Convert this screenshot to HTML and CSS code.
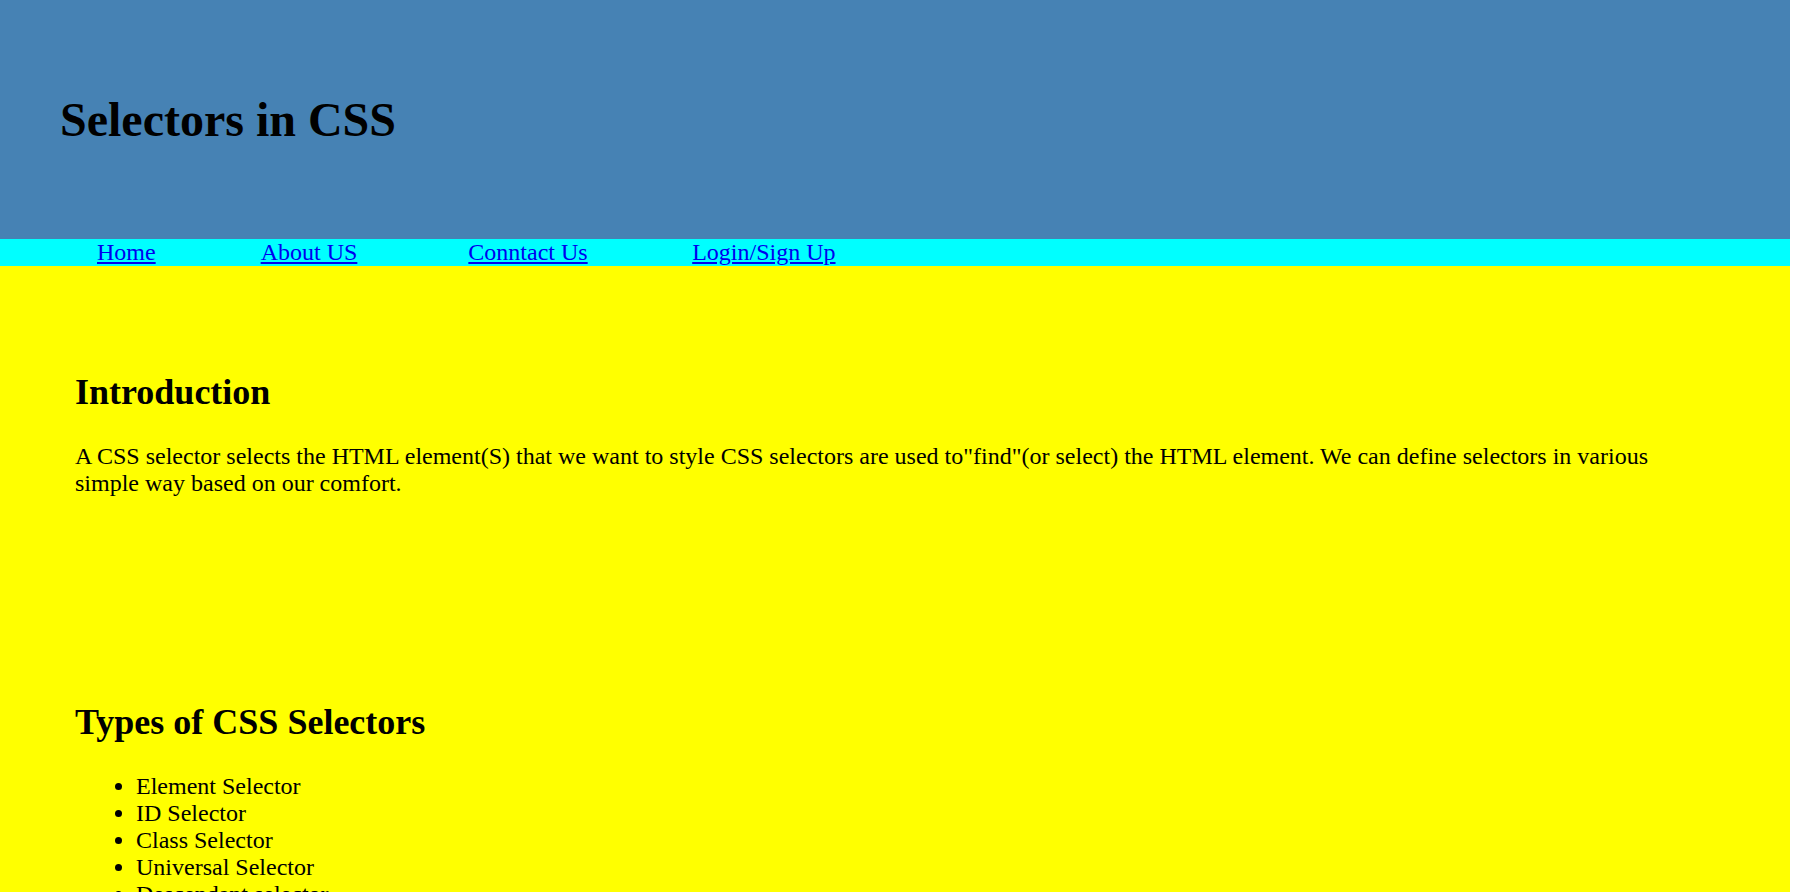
FILE: index.html
```html
<!DOCTYPE html>
<html lang="en">
<head>
<meta charset="utf-8">
<title>Selectors in CSS</title>
<link rel="stylesheet" href="styles.css">
</head>
<body class="page">
<header class="site-header">
  <h1 class="site-title">Selectors in CSS</h1>
</header>
<nav class="site-nav">
  <a href="#" class="nav-link nav-link--home">Home</a>
  <a href="#" class="nav-link nav-link--about">About US</a>
  <a href="#" class="nav-link nav-link--contact">Conntact Us</a>
  <a href="#" class="nav-link">Login/Sign Up</a>
</nav>
<main class="content">
  <section class="block">
    <h2 class="block-title">Introduction</h2>
    <p class="block-text">A CSS selector selects the HTML element(S) that we want to style CSS selectors are used to"find"(or select) the HTML element. We can define selectors in various simple way based on our comfort.</p>
  </section>
  <section class="block">
    <h2 class="block-title">Types of CSS Selectors</h2>
    <ul class="type-list">
      <li class="type-item">Element Selector</li>
      <li class="type-item">ID Selector</li>
      <li class="type-item">Class Selector</li>
      <li class="type-item">Universal Selector</li>
      <li class="type-item">Descendant selector</li>
      <li class="type-item">Child selector</li>
    </ul>
  </section>
</main>
</body>
</html>
```

FILE: styles.css
```css
html {
  scrollbar-width: none;
}

html::-webkit-scrollbar {
  display: none;
}

.page {
  margin: 0 5px 0 0;
  font-family: "Liberation Serif", "Times New Roman", serif;
  font-size: 24px;
  color: #000;
  background: #fff;
}

.site-header {
  background: #4682b4;
  padding: 60px;
}

.site-title {
  font-size: 48px;
  font-weight: bold;
  margin: 32.16px 0;
}

.site-nav {
  display: flex;
  padding-left: 97px;
  background: #00ffff;
}

.nav-link {
  color: #0000ee;
  text-decoration: underline;
}

.nav-link--home {
  margin-right: 105px;
}

.nav-link--about {
  margin-right: 111px;
}

.nav-link--contact {
  margin-right: 104.5px;
}

.content {
  background: #ffff00;
}

.block {
  padding: 75px;
}

.block-title {
  font-size: 36px;
  font-weight: bold;
  margin: 29.88px 0;
}

.block-text {
  margin: 24px 0;
}

.type-list {
  margin: 24px 0;
  padding-left: 61px;
}
```
